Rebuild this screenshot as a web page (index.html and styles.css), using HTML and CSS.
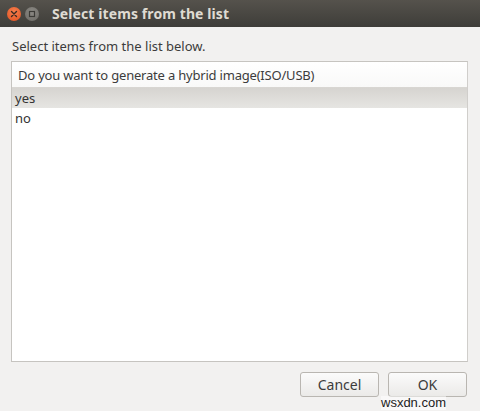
FILE: index.html
```html
<!DOCTYPE html>
<html>
<head>
<meta charset="utf-8">
<link rel="stylesheet" href="styles.css">
</head>
<body>
<div class="window">
  <div class="titlebar">
    <div class="controls">
      <span class="btn-close">
        <svg width="14" height="14" viewBox="0 0 14 14"><path d="M4.5 4.5 L9.5 9.5 M9.5 4.5 L4.5 9.5" stroke="#3a2a22" stroke-width="1.4" stroke-linecap="round"/></svg>
      </span>
      <span class="btn-max">
        <svg width="14" height="14" viewBox="0 0 14 14"><rect x="4.5" y="4.5" width="5" height="5" fill="none" stroke="#3c3b37" stroke-width="1.2"/></svg>
      </span>
    </div>
    <div class="title">Select items from the list</div>
  </div>
  <div class="content">
    <div class="label">Select items from the list below.</div>
    <div class="list">
      <div class="list-header">Do you want to generate a hybrid image(ISO/USB)</div>
      <div class="row selected">yes</div>
      <div class="row">no</div>
    </div>
    <div class="actions">
      <button class="button">Cancel</button>
      <button class="button">OK</button>
    </div>
  </div>
  <div class="watermark">wsxdn.com</div>
</div>
</body>
</html>
```
FILE: styles.css
```css
html, body {
  margin: 0;
  padding: 0;
}
body {
  width: 480px;
  height: 411px;
  overflow: hidden;
  background: #f2f1f0;
  font-family: "Noto Sans", "Open Sans", sans-serif;
  color: #3c3c3c;
}
.window {
  position: relative;
  width: 480px;
  height: 411px;
  display: flex;
  flex-direction: column;
}
.titlebar {
  height: 27px;
  background: linear-gradient(#55524c, #3e3d39);
  display: flex;
  align-items: center;
  box-sizing: border-box;
}
.controls {
  display: flex;
  gap: 4px;
  padding-left: 7px;
  width: 45px;
}
.btn-close, .btn-max {
  width: 14px;
  height: 14px;
  border-radius: 50%;
  display: flex;
}
.btn-close {
  background: radial-gradient(circle at 50% 35%, #f5804f, #e2501f);
}
.btn-max {
  background: radial-gradient(circle at 50% 35%, #8c8a85, #6b6964);
}
.title {
  margin-left: 0;
  color: #dfdbd2;
  font-weight: bold;
  font-size: 14px;
  letter-spacing: 0.1px;
}
.content {
  flex: 1;
  display: flex;
  flex-direction: column;
  padding: 0 12px 0 11px;
}
.label {
  height: 34px;
  line-height: 20px;
  padding-top: 9px;
  box-sizing: border-box;
  font-size: 13px;
  padding-left: 1px;
}
.list {
  height: 301px;
  box-sizing: border-box;
  border: 1px solid #c6c4c0;
  border-right-color: #d0cecb;
  background: #fff;
  font-size: 13px;
}
.list-header {
  height: 26px;
  line-height: 26px;
  padding-left: 6px;
  border-bottom: 1px solid #d8d6d2;
  box-sizing: border-box;
  background: linear-gradient(#ffffff, #f9f9f8);
  letter-spacing: -0.2px;
}
.row {
  height: 20px;
  line-height: 20px;
  padding-left: 3px;
  color: #333;
}
.row.selected {
  background: linear-gradient(#d6d4d0, #e6e5e2);
}
.actions {
  display: flex;
  justify-content: flex-end;
  gap: 9px;
  padding-top: 10px;
  padding-right: 1px;
}
.button {
  width: 79px;
  height: 25px;
  border: 1px solid #b9b6b1;
  border-radius: 3px;
  background: linear-gradient(#fbfbfb, #ebeae8);
  font-family: "Noto Sans", "Open Sans", sans-serif;
  font-size: 14px;
  color: #3c3c3c;
  padding: 0;
}
.watermark {
  position: absolute;
  left: 381px;
  top: 396px;
  font-family: "Liberation Sans", sans-serif;
  font-size: 13px;
  color: #222;
  background: rgba(255,255,255,0.5);
  line-height: 14px;
}
```
